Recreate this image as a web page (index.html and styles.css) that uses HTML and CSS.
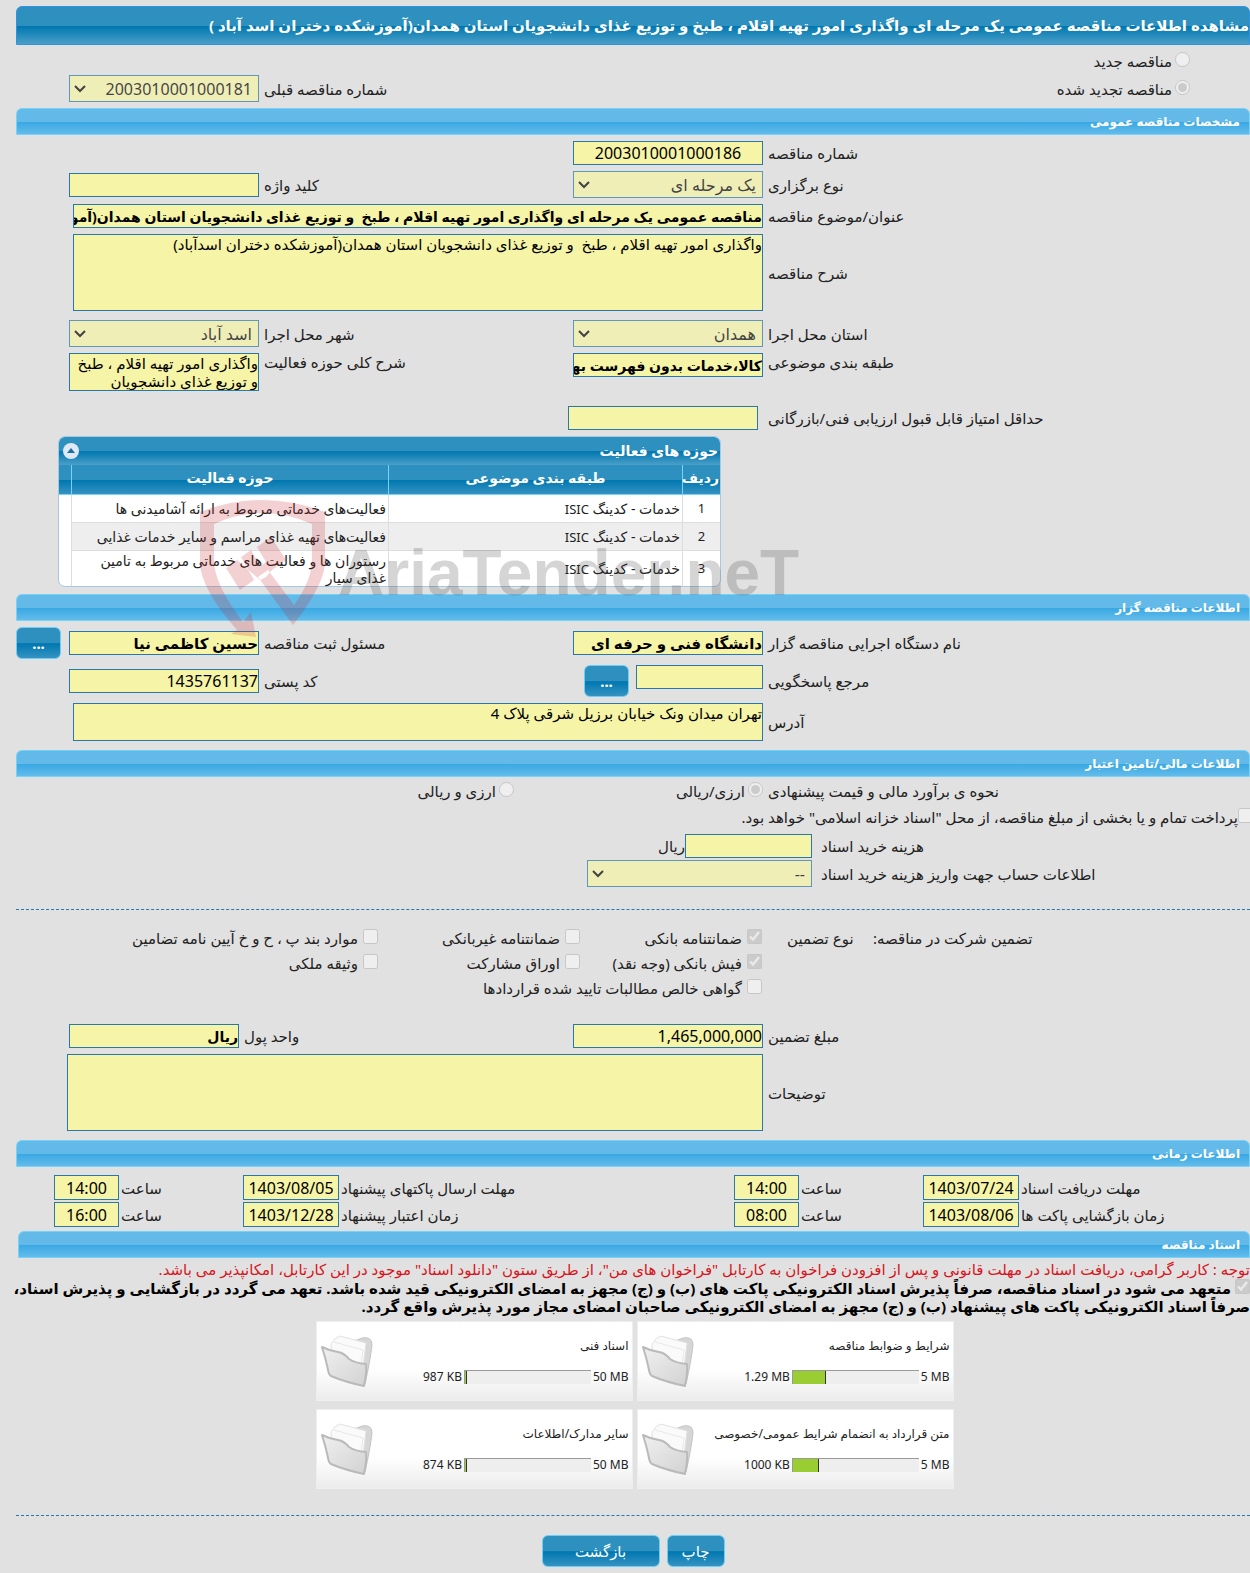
FILE: index.html
```html
<!DOCTYPE html>
<html lang="fa" dir="rtl">
  <head>
    <meta charset="UTF-8" />
    <meta name="viewport" content="width=device-width, initial-scale=1.0" />
    <title>مشاهده اطلاعات مناقصه عمومی</title>
    <link rel="stylesheet" href="styles.css">
  </head>
  <body>
    <main class="page">
      <h1 class="page-title">مشاهده اطلاعات مناقصه عمومی یک مرحله ای واگذاری امور تهیه اقلام ، طبخ و توزیع غذای دانشجویان استان همدان(آموزشکده دختران اسد آباد )</h1>

      <div class="kind">
        <label class="choice"><input type="radio" name="kind" disabled />مناقصه جدید</label>
        <div class="form-grid">
          <label class="choice"><input type="radio" name="kind" checked disabled />مناقصه تجدید شده</label>
          <label class="second" for="prevNo">شماره مناقصه قبلی</label>
          <select id="prevNo" disabled><option>2003010001000181</option></select>
        </div>
      </div>

      <h2 class="section-title">مشخصات مناقصه عمومی</h2>
      <div class="form-grid">
        <label for="tenderNo">شماره مناقصه</label>
        <input class="center" type="text" id="tenderNo" value="2003010001000186" readonly />
        <label class="first" for="holdType">نوع برگزاری</label>
        <select id="holdType" disabled><option>یک مرحله ای</option></select>
        <label for="keyword">کلید واژه</label>
        <input type="text" id="keyword" readonly />
        <label class="first" for="subject">عنوان/موضوع مناقصه</label>
        <input class="wide strong dense" type="text" id="subject" value="مناقصه عمومی یک مرحله ای واگذاری امور تهیه اقلام ، طبخ  و توزیع غذای دانشجویان استان همدان(آموزشکده دختران اسد آباد )" readonly />
        <label class="first" for="desc">شرح مناقصه</label>
        <textarea class="wide tall" id="desc" readonly>واگذاری امور تهیه اقلام ، طبخ  و توزیع غذای دانشجویان استان همدان(آموزشکده دختران اسدآباد)</textarea>
      </div>
      <div class="form-grid spaced">
        <label for="province">استان محل اجرا</label>
        <select id="province" disabled><option>همدان</option></select>
        <label for="city">شهر محل اجرا</label>
        <select id="city" disabled><option>اسد آباد</option></select>
        <label class="top" for="category">طبقه بندی موضوعی</label>
        <input class="strong dense top" type="text" id="category" value="کالا،خدمات بدون فهرست بهای پایه" readonly />
        <label class="top" for="scope">شرح کلی حوزه فعالیت</label>
        <textarea class="short" id="scope" readonly>واگذاری امور تهیه اقلام ، طبخ و توزیع غذای دانشجویان</textarea>
      </div>
      <div class="form-grid score">
        <label for="minScore">حداقل امتیاز قابل قبول ارزیابی فنی/بازرگانی</label>
        <input type="text" id="minScore" readonly />
      </div>

      <div class="activities">
        <div class="activities-bar">
          <h3>حوزه های فعالیت</h3>
          <button class="collapse" type="button" aria-label="بستن">
            <svg viewBox="0 0 16 16" width="16" height="16"><circle cx="8" cy="8" r="8" fill="#dfe9f6" /><path d="M4 10l4-5 4 5z" fill="#1d6fa3" /></svg>
          </button>
        </div>
        <table>
          <thead>
            <tr><th class="col-no">ردیف</th><th class="col-class">طبقه بندی موضوعی</th><th>حوزه فعالیت</th><th class="col-end"></th></tr>
          </thead>
          <tbody>
            <tr><td>1</td><td>خدمات - کدینگ <bdi>ISIC</bdi></td><td>فعالیت‌های خدماتی مربوط به ارائه آشامیدنی ها</td><td></td></tr>
            <tr><td>2</td><td>خدمات - کدینگ <bdi>ISIC</bdi></td><td>فعالیت‌های تهیه غذای مراسم و سایر خدمات غذایی</td><td></td></tr>
            <tr><td>3</td><td>خدمات - کدینگ <bdi>ISIC</bdi></td><td>رستوران ها و فعالیت های خدماتی مربوط به تامین غذای سیار</td><td></td></tr>
          </tbody>
        </table>
        <div class="watermark">
          <svg viewBox="0 0 126 138" width="126" height="138">
            <path fill="#c8202a" fill-rule="evenodd" d="M0 12Q62 -12 125 12V62Q125 84 93 125L58 77 68 70 94 105Q112 80 112 60V24Q62 2 14 24V60Q14 84 43 122L51 112 56 137 31 134 37 130Q0 88 0 62ZM26 68L41 57 54 80 40 90ZM37 60L51 50 60 66 66 62 57 47 71 37 86 60 72 70 66 77 60 80Z" />
          </svg>
          <span>AriaTender.neT</span>
        </div>
      </div>

      <h2 class="section-title">اطلاعات مناقصه گزار</h2>
      <div class="form-grid owner">
        <label for="org">نام دستگاه اجرایی مناقصه گزار</label>
        <input class="strong" type="text" id="org" value="دانشگاه فنی و حرفه ای" readonly />
        <label for="officer">مسئول ثبت مناقصه</label>
        <input class="strong" type="text" id="officer" value="حسین کاظمی نیا" readonly />
        <button class="btn more" type="button">...</button>
        <label class="first" for="contact">مرجع پاسخگویی</label>
        <div class="picker">
          <input type="text" id="contact" readonly />
          <button class="btn more" type="button">...</button>
        </div>
        <label for="postal">کد پستی</label>
        <input type="text" id="postal" value="1435761137" readonly />
        <label class="first" for="address">آدرس</label>
        <textarea class="wide short" id="address" readonly>تهران میدان ونک خیابان برزیل شرقی پلاک 4</textarea>
      </div>

      <h2 class="section-title">اطلاعات مالی/تامین اعتبار</h2>
      <div class="form-grid currency">
        <span class="caption">نحوه ی برآورد مالی و قیمت پیشنهادی</span>
        <div class="wide choices">
          <label class="choice"><input type="radio" name="currency" checked disabled />ارزی/ریالی</label>
          <label class="choice"><input type="radio" name="currency" disabled />ارزی و ریالی</label>
        </div>
      </div>
      <label class="choice treasury"><input type="checkbox" disabled />پرداخت تمام و یا بخشی از مبلغ مناقصه، از محل "اسناد خزانه اسلامی" خواهد بود.</label>
      <div class="cost-grid">
        <label for="cost">هزینه خرید اسناد</label>
        <div class="cost"><input type="text" id="cost" readonly /><span>ریال</span></div>
        <label for="account">اطلاعات حساب جهت واریز هزینه خرید اسناد</label>
        <select id="account" disabled><option>--</option></select>
      </div>

      <div class="guarantee">
        <span class="caption">تضمین شرکت در مناقصه:</span>
        <span class="caption type">نوع تضمین</span>
        <label class="choice first-type"><input type="checkbox" checked disabled />ضمانتنامه بانکی</label>
        <label class="choice"><input type="checkbox" disabled />ضمانتنامه غیربانکی</label>
        <label class="choice"><input type="checkbox" disabled />موارد بند پ ، ح و خ آیین نامه تضامین</label>
        <label class="choice first-type"><input type="checkbox" checked disabled />فیش بانکی (وجه نقد)</label>
        <label class="choice"><input type="checkbox" disabled />اوراق مشارکت</label>
        <label class="choice"><input type="checkbox" disabled />وثیقه ملکی</label>
        <label class="choice first-type span-two"><input type="checkbox" disabled />گواهی خالص مطالبات تایید شده قراردادها</label>
      </div>
      <div class="form-grid amounts">
        <label for="amount">مبلغ تضمین</label>
        <input type="text" id="amount" value="1,465,000,000" readonly />
        <label for="unit">واحد پول</label>
        <input class="strong dense" type="text" id="unit" value="ریال" readonly />
        <label class="first" for="notes">توضیحات</label>
        <textarea class="wide tall" id="notes" readonly></textarea>
      </div>

      <h2 class="section-title">اطلاعات زمانی</h2>
      <div class="dates">
        <label for="d1">مهلت دریافت اسناد</label>
        <input type="text" id="d1" value="1403/07/24" readonly />
        <label for="h1">ساعت</label>
        <input type="text" id="h1" value="14:00" readonly />
        <label for="d2">مهلت ارسال پاکتهای پیشنهاد</label>
        <input type="text" id="d2" value="1403/08/05" readonly />
        <label for="h2">ساعت</label>
        <input type="text" id="h2" value="14:00" readonly />
        <label for="d3">زمان بازگشایی پاکت ها</label>
        <input type="text" id="d3" value="1403/08/06" readonly />
        <label for="h3">ساعت</label>
        <input type="text" id="h3" value="08:00" readonly />
        <label for="d4">زمان اعتبار پیشنهاد</label>
        <input type="text" id="d4" value="1403/12/28" readonly />
        <label for="h4">ساعت</label>
        <input type="text" id="h4" value="16:00" readonly />
      </div>

      <h2 class="section-title docs-title">اسناد مناقصه</h2>
      <p class="notice">توجه : کاربر گرامی، دریافت اسناد در مهلت قانونی و پس از افزودن فراخوان به کارتابل "فراخوان های من"، از طریق ستون "دانلود اسناد" موجود در این کارتابل، امکانپذیر می باشد.</p>
      <label class="commitment"><input type="checkbox" checked disabled /> متعهد می شود در اسناد مناقصه، صرفاً پذیرش اسناد الکترونیکی پاکت های (ب) و (ج) مجهز به امضای الکترونیکی قید شده باشد. تعهد می گردد در بازگشایی و پذیرش اسناد، صرفاً اسناد الکترونیکی پاکت های پیشنهاد (ب) و (ج) مجهز به امضای الکترونیکی صاحبان امضای مجاز مورد پذیرش واقع گردد.</label>

      <svg class="defs" width="0" height="0">
        <defs>
          <linearGradient id="folderFront" x1="0" y1="0" x2="1" y2="1">
            <stop offset="0" stop-color="#f0f0f0" /><stop offset="1" stop-color="#d2d2d2" />
          </linearGradient>
        </defs>
        <symbol id="folder" viewBox="0 0 54 54">
          <path d="M32 8L42 4Q52 2 52 11 50 28 45 50L40 46Z" fill="#d6d6d6" stroke="#c4c4c4" />
          <path d="M11 10Q15 3 20 2L46 9 42 42 12 34Z" fill="#fafafa" stroke="#e2e2e2" />
          <path d="M14 8L43 16 40 38" fill="none" stroke="#e8e8e8" />
          <path d="M2 13Q10 17 18 18 24 19 29 25 35 29 46 30 47 38 44 52 25 48 11 42 9 41 8 36 6 26 2 13Z" fill="url(#folderFront)" stroke="#bababa" stroke-width="2" stroke-linejoin="round" />
        </symbol>
      </svg>
      <div class="files">
        <article class="file">
          <svg class="folder"><use href="#folder" /></svg>
          <h3>شرایط و ضوابط مناقصه</h3>
          <div class="usage"><span>1.29 MB</span><div class="bar"><div class="fill" style="width: 26%"></div></div><span>5 MB</span></div>
        </article>
        <article class="file">
          <svg class="folder"><use href="#folder" /></svg>
          <h3>اسناد فنی</h3>
          <div class="usage"><span>987 KB</span><div class="bar"><div class="fill" style="width: 2%"></div></div><span>50 MB</span></div>
        </article>
        <article class="file">
          <svg class="folder"><use href="#folder" /></svg>
          <h3>متن قرارداد به انضمام شرایط عمومی/خصوصی</h3>
          <div class="usage"><span>1000 KB</span><div class="bar"><div class="fill" style="width: 21%"></div></div><span>5 MB</span></div>
        </article>
        <article class="file">
          <svg class="folder"><use href="#folder" /></svg>
          <h3>سایر مدارک/اطلاعات</h3>
          <div class="usage"><span>874 KB</span><div class="bar"><div class="fill" style="width: 2%"></div></div><span>50 MB</span></div>
        </article>
      </div>

      <div class="actions">
        <button class="btn" type="button">چاپ</button>
        <button class="btn back" type="button">بازگشت</button>
      </div>
    </main>
  </body>
</html>
```
FILE: styles.css
```css
* {
  box-sizing: border-box;
}

body {
  margin: 0;
  background: #e1e1e1;
  color: #222;
  font-family: Tahoma, 'Noto Sans', 'DejaVu Sans', sans-serif;
  font-size: 15px;
  line-height: 18px;
}

.page {
  padding: 6px 0 6px 16px;
}

h1,
h2,
h3,
p {
  margin: 0;
}

.page-title {
  height: 39px;
  line-height: 37px;
  border: 1px solid #2e93e0;
  border-radius: 6px 6px 0 0;
  background: linear-gradient(#2e90be 50%, #0077b0 52%, #4a9fc8);
  color: white;
  font-size: 15px;
  white-space: nowrap;
  overflow: hidden;
}

.section-title {
  height: 27px;
  line-height: 25px;
  padding: 0 9px;
  border: 1px solid #76d2f9;
  border-radius: 6px 6px 0 0;
  background: linear-gradient(#63bae9 50%, #3aa8e3 53%, #63bceb);
  color: white;
  font-size: 12px;
}

input[type='text'],
textarea,
select {
  width: 100%;
  margin: 0;
  border: 1px solid #2878a8;
  border-radius: 0;
  background: #f6f4a6;
  color: #000;
  font-family: inherit;
}

input[type='text'] {
  height: 24px;
  padding: 0;
  font-size: 16px;
}

select {
  height: 27px;
  padding: 0 6px;
  appearance: none;
  background: #f6f4a6 url("data:image/svg+xml,%3Csvg xmlns='http://www.w3.org/2000/svg' width='12' height='8'%3E%3Cpath d='M1 1l5 5 5-5' fill='none' stroke='black' stroke-width='2'/%3E%3C/svg%3E") no-repeat 4px center;
  font-size: 16px;
}

select:disabled {
  opacity: 0.7;
}

textarea {
  display: block;
  padding: 0;
  font-size: 15px;
  line-height: 18px;
  resize: none;
  overflow: hidden;
}

.tall {
  height: 77px;
}

.short {
  height: 38px;
}

.center,
.dates input {
  text-align: center;
}

input.strong {
  font-size: 15px;
  font-weight: bold;
}

input.dense {
  font-size: 14px;
}

input[type='radio'],
input[type='checkbox'] {
  width: 15px;
  height: 15px;
  margin: 0 0 3px;
  flex: none;
}

.choice {
  display: flex;
  align-items: center;
  gap: 3px;
  white-space: nowrap;
}

/* label and field pairs, two to a row */
.form-grid {
  display: grid;
  grid-template-columns: 482fr 190px 304fr 190px;
  gap: 6px 5px;
  align-items: center;
  padding: 6px 0 9px 53px;
}

.form-grid > label,
.form-grid > .caption,
.cost-grid > label,
.dates > label,
.guarantee > .caption {
  text-align: left;
  white-space: nowrap;
}

.form-grid .first {
  grid-column: 1;
}

.form-grid .wide {
  grid-column: 2 / 5;
  width: auto;
  margin-left: 4px;
}

.form-grid .top {
  align-self: start;
}

.kind > .choice {
  padding: 7px 60px 0 0;
}

.kind .form-grid {
  padding: 5px 0 6px 53px;
}

.kind .form-grid .choice {
  margin-right: 60px;
}

.kind .second {
  grid-column: 3;
}

.spaced {
  padding: 0 0 15px 53px;
}

.score {
  grid-template-columns: 482fr 190px 499fr;
  padding: 0 0 6px 53px;
}

.score input {
  margin-right: 5px;
}

.activities {
  position: relative;
  width: 663px;
  margin: 0 auto 7px 42px;
  border: 1px solid #a3c9e3;
  border-radius: 7px;
  background: white;
}

.activities-bar {
  display: flex;
  align-items: center;
  justify-content: space-between;
  height: 28px;
  padding: 0 2px 0 4px;
  border-radius: 6px 6px 0 0;
  background: linear-gradient(#2e90be 50%, #0077b0 52%, #4a9fc8);
  color: white;
}

.activities-bar h3 {
  font-size: 14px;
}

.collapse {
  display: flex;
  padding: 0;
  border: 0;
  background: none;
}

.activities table {
  width: 100%;
  table-layout: fixed;
  border-collapse: separate;
  border-spacing: 0;
  font-size: 14px;
  line-height: 17px;
}

.activities th {
  height: 30px;
  padding: 0 1px 4px;
  border-bottom: 1px solid #76d2f9;
  background: linear-gradient(#2e90be 50%, #0077b0 52%, #3593c2);
  color: white;
  font-size: 14px;
}

.activities th + th {
  border-right: 1px solid #76d2f9;
}

.activities td {
  height: 28px;
  padding: 0 2px;
  border-bottom: 1px solid #ddd;
}

.activities td + td {
  border-right: 1px solid #ddd;
}

.activities td:first-child {
  text-align: center;
}

.activities bdi,
.activities td:first-child {
  font-size: 13px;
}

.activities tr:nth-child(2) td {
  background: #eee;
}

.activities tr td:last-child {
  background: white;
  border-bottom: 0;
}

.activities tbody tr:last-child td {
  height: 35px;
  border-bottom: 0;
  background: none;
}

.col-no {
  width: 37px;
}

.col-class {
  width: 294px;
}

.col-end {
  width: 13px;
}

.watermark {
  position: absolute;
  top: 63px;
  left: 141px;
  display: flex;
  direction: ltr;
  gap: 12px;
  opacity: 0.2;
  pointer-events: none;
}

.watermark span {
  padding-top: 28px;
  color: #333;
  font-family: 'Liberation Sans', sans-serif;
  font-size: 64px;
  font-weight: bold;
  line-height: 90px;
}

.btn {
  min-width: 58px;
  height: 32px;
  padding: 0 12px;
  border: 1px solid #6ccdf5;
  border-radius: 6px;
  background: linear-gradient(#2e90be 50%, #0077b0 52%, #3593c2);
  color: white;
  font-family: inherit;
  font-size: 15px;
}

.btn.more {
  min-width: 45px;
  width: 45px;
  padding: 0;
  font-weight: bold;
}

.owner {
  grid-template-columns: 482fr 190px 304fr 190px 48px;
  padding-left: 0;
}

.owner > .more {
  justify-self: end;
}

.picker {
  display: flex;
  gap: 7px;
}

.picker input {
  flex: none;
  width: 127px;
}

.currency {
  padding: 5px 0 0 53px;
}

.choices {
  display: grid;
  grid-template-columns: 249px 1fr;
}

.treasury {
  gap: 0;
  padding: 8px 0;
  margin-right: -3px;
}

.cost-grid {
  display: grid;
  grid-template-columns: 429fr 225px 562fr;
  gap: 2px 9px;
  align-items: center;
  padding-bottom: 22px;
}

.cost-grid > label {
  grid-column: 1;
}

.cost {
  display: flex;
  align-items: center;
}

.cost input {
  flex: none;
  width: 127px;
}

.guarantee {
  display: grid;
  grid-template-columns: 377fr 111px 182px 202px 362fr;
  row-gap: 7px;
  padding: 19px 0 27px;
  border-top: 1px dashed #2878a8;
}

.guarantee .type {
  padding-left: 25px;
}

.guarantee .choice {
  gap: 5px;
}

.guarantee .first-type {
  grid-column: 3;
}

.guarantee .span-two {
  grid-column: 3 / 5;
}

.amounts {
  grid-template-columns: 482fr 190px 324fr 170px;
  padding-top: 0;
}

.form-grid #notes {
  margin-left: -2px;
}

.dates {
  display: grid;
  grid-template-columns: 229fr 96px 120fr 65px 391fr 96px 120fr 65px;
  gap: 2px;
  align-items: center;
  padding: 8px 0 4px 38px;
}

.dates input[type='text'] {
  height: 25px;
}

.docs-title {
  margin-left: 2px;
}

.notice {
  padding-top: 2px;
  color: #d8141c;
  white-space: nowrap;
}

.commitment {
  display: block;
  margin-left: -12px;
  padding-top: 1px;
  color: #000;
  font-weight: bold;
}

.defs {
  display: block;
}

.files {
  display: grid;
  grid-template-columns: 317px 317px;
  gap: 8px 4px;
  justify-content: center;
  padding: 6px 0 26px 3px;
}

.file {
  display: grid;
  grid-template-columns: 1fr 54px;
  align-items: center;
  height: 80px;
  padding: 8px 3px;
  border: 1px solid #eee;
  background: linear-gradient(#fff 60%, #ececec);
  font-size: 12px;
}

.file h3 {
  font-size: 12px;
  font-weight: normal;
}

.folder {
  grid-column: 2;
  grid-row: 1 / 3;
  width: 54px;
  height: 54px;
}

.usage {
  grid-column: 1;
  display: flex;
  align-items: center;
  justify-content: flex-end;
  gap: 2px;
  direction: ltr;
}

.bar {
  width: 127px;
  height: 14px;
  border-top: 1px solid #999;
  border-left: 1px solid #999;
  background: #eee;
}

.fill {
  height: 100%;
  border-right: 1px solid #333;
  background: #9acd32;
}

.actions {
  display: flex;
  justify-content: center;
  gap: 7px;
  padding-top: 19px;
  border-top: 1px dashed #2878a8;
}

.back {
  width: 118px;
}
```
